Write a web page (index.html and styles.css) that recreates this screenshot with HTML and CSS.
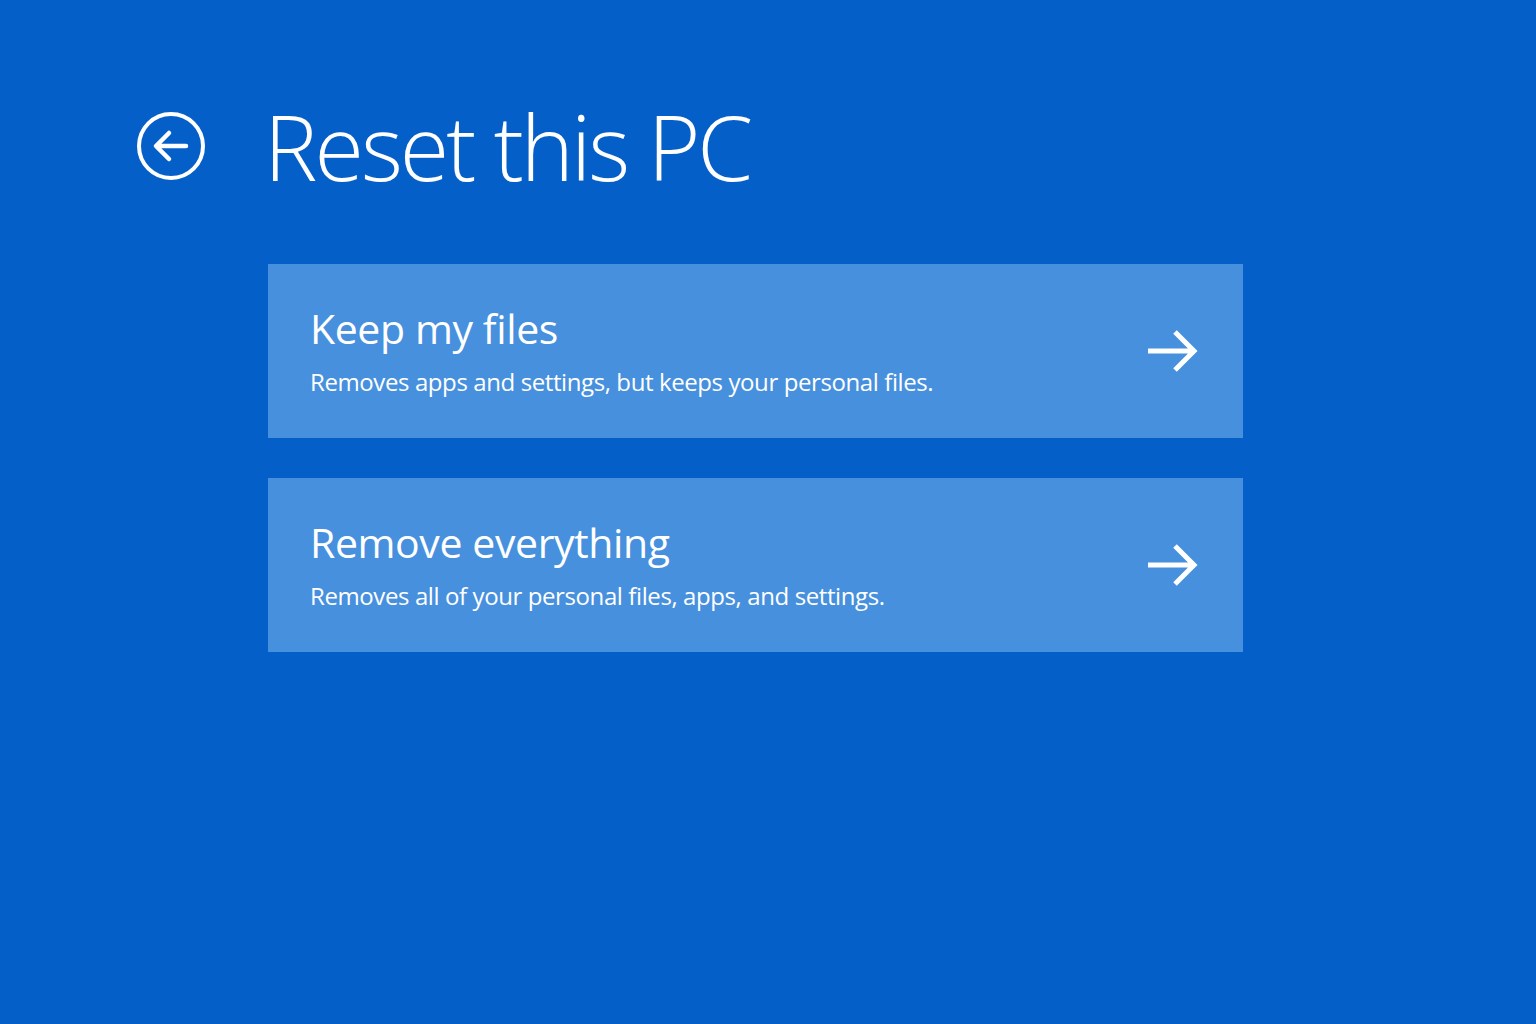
FILE: index.html
```html
<!DOCTYPE html>
<html lang="en">
<head>
    <meta charset="UTF-8">
    <meta name="viewport" content="width=device-width, initial-scale=1.0">
    <title>Reset this PC</title>
    <link rel="stylesheet" href="styles.css">
</head>
<body>

<div class="screen">
    <header class="title-row">
        <button class="back" aria-label="Back">
            <svg width="70" height="70" viewBox="0 0 70 70">
                <circle cx="35" cy="35" r="32" fill="none" stroke="#fff" stroke-width="4"/>
                <path d="M50 35 H21 M33 22 L20 35 L33 48" fill="none" stroke="#fff" stroke-width="4.5" stroke-linecap="round" stroke-linejoin="round"/>
            </svg>
        </button>
        <h1>Reset this PC</h1>
    </header>

    <div class="options">
        <a class="option" href="#">
            <div class="option-text">
                <h2>Keep my files</h2>
                <p>Removes apps and settings, but keeps your personal files.</p>
            </div>
            <svg class="go" width="54" height="46" viewBox="0 0 54 46">
                <path d="M3 23 H49 M30 4 L49 23 L30 42" fill="none" stroke="#fff" stroke-width="5" stroke-linejoin="miter"/>
            </svg>
        </a>

        <a class="option" href="#">
            <div class="option-text">
                <h2>Remove everything</h2>
                <p>Removes all of your personal files, apps, and settings.</p>
            </div>
            <svg class="go" width="54" height="46" viewBox="0 0 54 46">
                <path d="M3 23 H49 M30 4 L49 23 L30 42" fill="none" stroke="#fff" stroke-width="5" stroke-linejoin="miter"/>
            </svg>
        </a>
    </div>
</div>

</body>
</html>
```

FILE: styles.css
```css
html, body {
    margin: 0;
    padding: 0;
    height: 100%;
}

body {
    background-color: #055fc8;
    font-family: 'Open Sans', 'Noto Sans', sans-serif;
    color: #fff;
}

.screen {
    padding: 88px 0 0 136px;
}

.title-row {
    display: flex;
    align-items: center;
    gap: 58px;
}

.back {
    background: none;
    border: none;
    padding: 0;
    margin: 0;
    width: 70px;
    height: 70px;
    cursor: pointer;
}

.back svg {
    display: block;
}

h1 {
    margin: 0;
    font-size: 90px;
    font-weight: 300;
    line-height: 116px;
    letter-spacing: -3px;
}

.options {
    display: flex;
    flex-direction: column;
    gap: 40px;
    margin: 60px 0 0 132px;
    width: 975px;
}

.option {
    display: flex;
    align-items: center;
    justify-content: space-between;
    height: 174px;
    box-sizing: border-box;
    padding: 0 44px 0 42px;
    background-color: #4790de;
    color: #fff;
    text-decoration: none;
}

.option-text {
    margin-top: 2px;
}

.option h2 {
    margin: 0;
    font-size: 41px;
    font-weight: 400;
    line-height: 54px;
    letter-spacing: -0.4px;
}

.option p {
    margin: 6px 0 0;
    font-size: 24px;
    font-weight: 400;
    line-height: 42px;
    letter-spacing: -0.4px;
}

.go {
    display: block;
}
```
